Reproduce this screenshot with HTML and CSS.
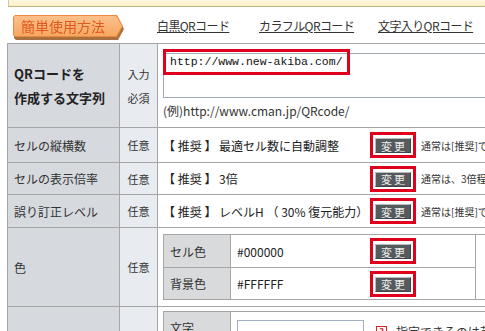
FILE: index.html
```html
<!DOCTYPE html>
<html lang="ja">
<head>
<meta charset="utf-8">
<title>QRコード作成</title>
<link rel="stylesheet" href="styles.css">
</head>
<body>
<div class="topbar"></div>
<div class="nav">
  <div class="tabwrap"><div class="tab-outer"><div class="tab">簡単使用方法</div></div></div>
  <a class="navlink w1" href="#">白黒QRコード</a>
  <a class="navlink w2" href="#">カラフルQRコード</a>
  <a class="navlink" href="#">文字入りQRコード</a>
</div>
<table class="form">
  <colgroup><col class="c1"><col class="c2"><col class="c3"></colgroup>
  <tr class="r1">
    <th class="label strong">QRコードを<br>作成する文字列</th>
    <td class="req">入力<br>必須</td>
    <td class="content top">
      <div class="textarea"><span class="mark-text">http://www.new-akiba.com/</span></div>
      <div class="example">(例)http://www.cman.jp/QRcode/</div>
    </td>
  </tr>
  <tr class="r2">
    <th class="label">セルの縦横数</th>
    <td class="req">任意</td>
    <td class="content"><div class="line"><span class="value">【 推奨 】 最適セル数に自動調整</span><span class="mark"><button class="btn">変更</button></span><span class="note">通常は[推奨]で問題ありません</span></div></td>
  </tr>
  <tr class="r3">
    <th class="label">セルの表示倍率</th>
    <td class="req">任意</td>
    <td class="content"><div class="line"><span class="value">【 推奨 】 3倍</span><span class="mark"><button class="btn">変更</button></span><span class="note">通常は、3倍程度で問題ありません</span></div></td>
  </tr>
  <tr class="r4">
    <th class="label">誤り訂正レベル</th>
    <td class="req">任意</td>
    <td class="content"><div class="line"><span class="value">【 推奨 】 レベルH （ 30% 復元能力）</span><span class="mark"><button class="btn">変更</button></span><span class="note">通常は[推奨]で問題ありません</span></div></td>
  </tr>
  <tr class="r5">
    <th class="label">色</th>
    <td class="req">任意</td>
    <td class="content pad">
      <table class="inner">
        <colgroup><col class="i1"><col class="i2"><col class="i3"></colgroup>
        <tr class="ir1">
          <th class="ilabel">セル色</th>
          <td class="ivalue"><div class="line"><span class="code">#000000</span><span class="mark"><button class="btn">変更</button></span></div></td>
          <td class="iextra" rowspan="2"></td>
        </tr>
        <tr class="ir2">
          <th class="ilabel">背景色</th>
          <td class="ivalue"><div class="line"><span class="code">#FFFFFF</span><span class="mark"><button class="btn">変更</button></span></div></td>
        </tr>
      </table>
    </td>
  </tr>
  <tr class="r6">
    <th class="label"></th>
    <td class="req"></td>
    <td class="content pad">
      <table class="inner">
        <colgroup><col class="i1"><col class="i2"><col class="i3"></colgroup>
        <tr class="ir3">
          <th class="ilabel">文字</th>
          <td class="ivalue" colspan="2"><div class="line"><span class="input"></span><span class="help">?</span><span class="hint">指定できるのは英数字のみです</span></div></td>
        </tr>
      </table>
    </td>
  </tr>
</table>
</body>
</html>
```

FILE: styles.css
```css
html, body {
  margin: 0;
  padding: 0;
  background: #ffffff;
  overflow: hidden;
}
body {
  width: 485px;
  height: 331px;
  font-family: "Noto Sans CJK JP", "Noto Sans", sans-serif;
  font-size: 12px;
  color: #333333;
}

/* top strip */
.topbar {
  margin-left: 8px;
  height: 6px;
  background: linear-gradient(#fdf7de, #fbefc6);
  border-bottom: 1px solid #c4b283;
  border-left: 1px solid #d8c898;
}

/* navigation */
.nav {
  display: flex;
  align-items: flex-start;
  height: 28px;
  padding-top: 8px;
}
.tabwrap {
  margin-left: 13px;
  filter: drop-shadow(1px 3px 0 #a8703e);
  flex-shrink: 0;
}
.tab-outer {
  box-sizing: border-box;
  width: 110px;
  height: 22px;
  padding: 1px;
  background: #e98a40;
  clip-path: polygon(2px 0, 104px 0, 110px 11px, 104px 22px, 2px 22px, 0 20px, 0 2px);
}
.tab {
  box-sizing: border-box;
  height: 20px;
  padding-left: 7px;
  background: linear-gradient(#fbc08c, #f6a862);
  clip-path: polygon(1px 0, 102px 0, 108px 10px, 102px 20px, 1px 20px, 0 19px, 0 1px);
  color: #e0581f;
  font-size: 14px;
  line-height: 20px;
  white-space: nowrap;
}
.navlink {
  flex-shrink: 0;
  color: #333333;
  font-size: 12px;
  line-height: 20px;
  margin-top: 1px;
  letter-spacing: -0.6px;
  text-decoration: underline;
  white-space: nowrap;
}
.navlink.w1 { margin-left: 34px; width: 102px; }
.navlink.w2 { width: 119px; }

/* main form table */
.form {
  margin-left: 7px;
  border-collapse: collapse;
  table-layout: fixed;
  width: 700px;
}
.form .c1 { width: 112px; }
.form .c2 { width: 38px; }
.form .c3 { width: 550px; }
.form > tbody > tr > th,
.form > tbody > tr > td {
  border: 1px solid #a6a6a6;
  padding: 0;
}
.label {
  background: #d6d9dd;
  text-align: left;
  font-weight: normal;
  padding-left: 6px !important;
  font-size: 12px;
  white-space: nowrap;
}
.label.strong {
  font-weight: bold;
  font-size: 13px;
  line-height: 24px;
  color: #222;
}
.req {
  background: #e8ebef;
  text-align: center;
  font-size: 11px;
  line-height: 24px;
}
.content {
  background: #ffffff;
  padding-left: 5px !important;
}
.content.top {
  vertical-align: top;
  padding-top: 9px !important;
}
.content.pad {
  padding-top: 6px !important;
  padding-bottom: 6px !important;
}
.r1 { height: 84px; }
.r2 { height: 35px; }
.r3 { height: 32px; }
.r4 { height: 33px; }
.r5 { height: 79px; }
.r6 { height: 40px; }
.r6 > td.content { vertical-align: top; padding-top: 4px !important; }

.textarea {
  box-sizing: border-box;
  height: 45px;
  border: 1px solid #a2aab4;
  border-right: none;
}
.mark-text {
  display: block;
  width: fit-content;
  margin: -5px 0 0 -1px;
  padding: 0 4px;
  border: 3px solid #e0001b;
  font-family: "Liberation Mono", monospace;
  font-size: 11.5px;
  line-height: 20px;
  color: #111;
  background: transparent;
}
.example {
  margin-top: 4px;
  line-height: 18px;
  font-size: 12px;
  color: #333;
}

.line {
  display: flex;
  align-items: center;
  white-space: nowrap;
}
.value {
  flex-shrink: 0;
  width: 207px;
  font-size: 12px;
  color: #222;
}
.mark {
  flex-shrink: 0;
  display: inline-flex;
  border: 3px solid #e0001b;
  padding: 3px 2px 2px 2px;
}
.btn {
  box-sizing: border-box;
  width: 36px;
  height: 15px;
  padding: 0;
  margin: 0;
  background: #555a5d;
  border: 1px solid;
  border-color: #b8bcbf #404446 #404446 #b8bcbf;
  color: #eeeeee;
  font-family: "Noto Sans CJK JP", sans-serif;
  font-size: 11px;
  line-height: 12px;
  letter-spacing: 2px;
  text-indent: 2px;
}
.note {
  margin-left: 5px;
  font-size: 10px;
  color: #333;
}

/* nested tables */
.inner {
  border-collapse: collapse;
  table-layout: fixed;
  width: 420px;
}
.inner .i1 { width: 67px; }
.inner .i2 { width: 245px; }
.inner .i3 { width: 108px; }
.inner th, .inner td {
  border: 1px solid #a6a6a6;
  padding: 0;
}
.ilabel {
  background: #d8dadc;
  text-align: left;
  font-weight: normal;
  font-size: 12px;
  padding-left: 6px !important;
}
.ivalue {
  background: #fff;
  padding-left: 6px !important;
}
.iextra { background: #fff; }
.ir1 { height: 33px; }
.ir2 { height: 32px; }
.ir3 { height: 30px; }
.code {
  width: 133px;
  flex-shrink: 0;
  font-size: 12px;
  color: #222;
}
.input {
  flex-shrink: 0;
  box-sizing: border-box;
  width: 127px;
  height: 22px;
  margin-top: 8px;
  border: 1px solid #9fb0c4;
  background: #fff;
}
.help {
  flex-shrink: 0;
  box-sizing: border-box;
  width: 11px;
  height: 11px;
  margin-left: 12px;
  margin-top: 8px;
  border: 1px solid #d22;
  color: #d22;
  font-size: 9px;
  line-height: 9px;
  text-align: center;
  font-weight: bold;
}
.hint {
  margin-left: 9px;
  margin-top: 8px;
  font-size: 12px;
  color: #333;
}
```
